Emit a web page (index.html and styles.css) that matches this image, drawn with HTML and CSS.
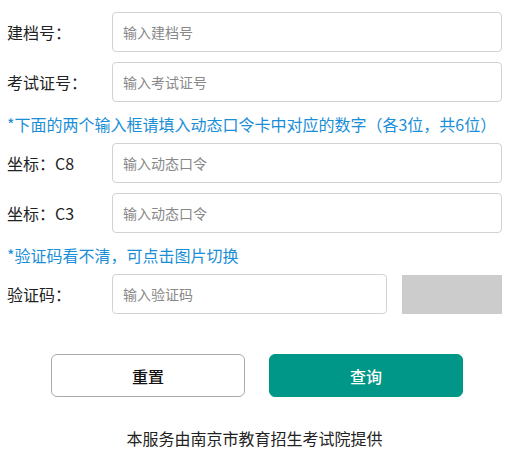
FILE: index.html
```html
<!DOCTYPE html>
<html lang="zh-CN">
<head>
    <meta charset="UTF-8">
    <meta name="viewport" content="width=device-width, initial-scale=1.0">
    <title>成绩查询</title>
    <link rel="stylesheet" href="styles.css">
</head>
<body>
    <div class="form">
        <div class="row">
            <label class="label">建档号：</label>
            <input class="field" type="text" placeholder="输入建档号">
        </div>
        <div class="row">
            <label class="label">考试证号：</label>
            <input class="field" type="text" placeholder="输入考试证号">
        </div>

        <p class="tip">*下面的两个输入框请填入动态口令卡中对应的数字（各3位，共6位）</p>

        <div class="row">
            <label class="label">坐标：C8</label>
            <input class="field" type="text" placeholder="输入动态口令">
        </div>
        <div class="row">
            <label class="label">坐标：C3</label>
            <input class="field" type="text" placeholder="输入动态口令">
        </div>

        <p class="tip">*验证码看不清，可点击图片切换</p>

        <div class="row">
            <label class="label">验证码：</label>
            <input class="field short" type="text" placeholder="输入验证码">
            <div class="captcha"></div>
        </div>

        <div class="actions">
            <button class="btn btn-reset" type="reset">重置</button>
            <button class="btn btn-query" type="button">查询</button>
        </div>

        <p class="footer">本服务由南京市教育招生考试院提供</p>
    </div>
</body>
</html>
```

FILE: styles.css
```css
*{
    padding: 0;
    margin: 0;
    box-sizing: border-box;
}
body{
    background: #fff;
    font-family: "Microsoft YaHei", "Noto Sans CJK SC", sans-serif;
    font-size: 16px;
    color: #222;
}
.form{
    padding: 12px 10px 0 7px;
}
.row{
    display: flex;
    align-items: center;
    height: 40px;
    margin-bottom: 10px;
}
.label{
    width: 105px;
    flex-shrink: 0;
    line-height: 20px;
}
.field{
    flex: 1;
    height: 40px;
    border: 1px solid #d2d2d2;
    border-radius: 4px;
    padding: 0 10px;
    font-family: inherit;
    font-size: 14px;
    color: #333;
    outline: none;
}
.field::placeholder{
    color: #888;
}
.field.short{
    flex: none;
    width: 275px;
}
.captcha{
    width: 100px;
    height: 39px;
    margin-left: 15px;
    background: #cccccc;
}
.tip{
    color: #1a8ed6;
    line-height: 20px;
    padding: 12px 0 9px;
    margin-top: -10px;
}
.actions{
    display: flex;
    justify-content: center;
    gap: 24px;
    margin-top: 40px;
    padding-left: 5px;
}
.btn{
    width: 194px;
    height: 43px;
    border-radius: 6px;
    font-family: inherit;
    font-size: 16px;
    font-weight: 500;
    cursor: pointer;
}
.btn-reset{
    background: #fff;
    border: 1px solid #aaa;
    color: #111;
}
.btn-query{
    background: #009688;
    border: 1px solid #009688;
    color: #fff;
}
.footer{
    text-align: center;
    margin-top: 31px;
    line-height: 20px;
}
```
